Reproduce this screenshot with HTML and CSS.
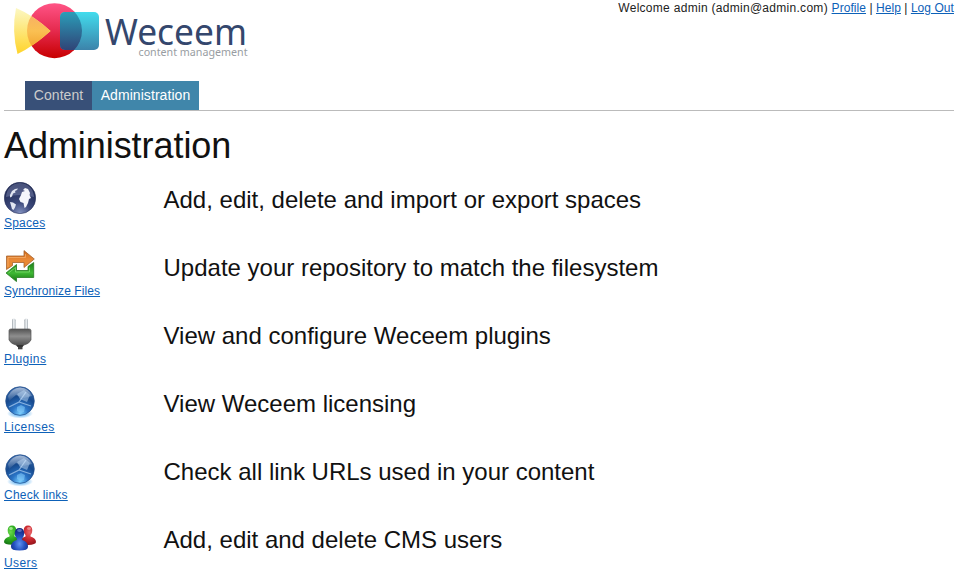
FILE: index.html
```
<!DOCTYPE html>
<html lang="en">
<head>
<meta charset="utf-8">
<title>Weceem - Administration</title>
<link rel="stylesheet" href="styles.css">
</head>
<body>
<svg class="defs" width="0" height="0" aria-hidden="true">
  <defs>
    <radialGradient id="orb" cx=".5" cy=".95" r=".95"><stop offset="0" stop-color="#7ad0ff"/><stop offset=".3" stop-color="#2a74c6"/><stop offset=".65" stop-color="#174a8e"/><stop offset="1" stop-color="#3a68a8"/></radialGradient>
    <linearGradient id="shine" x2="0" y2="1"><stop offset="0" stop-color="#fff" stop-opacity=".55"/><stop offset="1" stop-color="#fff" stop-opacity=".05"/></linearGradient>
    <radialGradient id="halo"><stop offset=".4" stop-color="#56aef0" stop-opacity=".8"/><stop offset="1" stop-color="#56aef0" stop-opacity="0"/></radialGradient>
    <symbol id="globe" viewBox="0 0 32 32">
      <ellipse cx="16" cy="27.500" rx="13" ry="5" fill="url(#halo)"/>
      <circle cx="16" cy="15" r="14.300" fill="url(#orb)" stroke="#234f8c" stroke-width=".7"/>
      <path d="M13 21l4-2 4 2-1 5-3 1-4-2z" fill="#8ed4ff" opacity=".5"/>
      <path d="M4 10Q8 2 16 1.500Q25 2 28 10L20 12 12 9 5 15z" fill="url(#shine)"/>
      <path d="M13 8l7-4 6 5-3 7-7-3z" fill="#bcd8f4" opacity=".5"/>
      <path d="M5 21L15 16 22 6M15 16L27 20" fill="none" stroke="#c9e5ff" stroke-width="1.300" opacity=".6"/>
    </symbol>
  </defs>
</svg>
<header class="header">
  <svg class="logo" width="256" height="66" viewBox="0 0 256 66" role="img" aria-label="Weceem content management">
    <defs>
      <linearGradient id="red" x2="0" y2="1"><stop offset="0" stop-color="#ff5486"/><stop offset=".5" stop-color="#e52a4e"/><stop offset="1" stop-color="#c80000"/></linearGradient>
      <linearGradient id="yellow" x2="0" y2="1"><stop offset="0" stop-color="#fcf8c4"/><stop offset="1" stop-color="#ffd42a"/></linearGradient>
      <linearGradient id="amber" x2="0" y2="1"><stop offset="0" stop-color="#f7aa6c"/><stop offset=".5" stop-color="#fac053"/><stop offset="1" stop-color="#f09a22"/></linearGradient>
      <linearGradient id="cyan" x2="0" y2="1"><stop offset="0" stop-color="#42dced"/><stop offset="1" stop-color="#3c83aa"/></linearGradient>
      <linearGradient id="navy" x2="0" y2="1"><stop offset="0" stop-color="#2b9db8"/><stop offset="1" stop-color="#304477"/></linearGradient>
      <clipPath id="disc"><circle cx="54.500" cy="30.700" r="27.500"/></clipPath>
    </defs>
    <circle cx="54.500" cy="30.700" r="27.500" fill="url(#red)"/>
    <path d="M16 8Q33 15 50.500 31Q34 46 17.500 54Q11.500 31 16 8Z" fill="url(#yellow)"/>
    <rect x="60" y="12" width="39" height="38" rx="5" fill="url(#cyan)"/>
    <g clip-path="url(#disc)">
      <path d="M16 8Q33 15 50.500 31Q34 46 17.500 54Q11.500 31 16 8Z" fill="url(#amber)"/>
      <rect x="60" y="12" width="39" height="38" rx="5" fill="url(#navy)"/>
    </g>
    <text class="brand" x="105" y="45" textLength="142" lengthAdjust="spacingAndGlyphs">Weceem</text>
    <text class="tagline" x="138.500" y="56" textLength="109" lengthAdjust="spacingAndGlyphs">content management</text>
  </svg>
  <div class="account">Welcome admin (admin@admin.com) <span class="links"><a href="#">Profile</a> | <a href="#">Help</a> | <a href="#">Log Out</a></span></div>
</header>
<nav class="tabs"><a class="tab" href="#">Content</a><a class="tab tab-active" href="#">Administration</a></nav>
<main>
  <h1>Administration</h1>
  <div class="row">
    <div class="tool">
      <svg class="icon" viewBox="0 0 32 32">
        <defs><radialGradient id="space" cx=".5" cy="1" r=".9"><stop offset="0" stop-color="#8796c4"/><stop offset=".4" stop-color="#3d4a7c"/><stop offset="1" stop-color="#1d2750"/></radialGradient></defs>
        <circle cx="16" cy="16" r="15.700" fill="url(#space)" stroke="#27305a" stroke-width=".6"/>
        <path d="M2 15Q3 2 16 1Q29 2 30 15Q16 11 2 15Z" fill="#aab5dc" opacity=".32"/>
        <path d="M6 13l2-4 3-2 3-.5-1 1.500-2 1 .5 1.500-2.500 1-1 3-2 1zM6 20l3 .5 3 2-1 3-1.500 2.500-1.500-1z" fill="#e2e6f2"/>
        <path d="M17 13l1-3 3-1-2-1 2-2 3 1 2 4-.5 2 1.500 3-2 1-1 4-2 4-1.500 1-1-5-3-1-1.500-3z" fill="#f4f6fb"/>
      </svg>
      <a href="#">Spaces</a>
    </div>
    <div class="desc">Add, edit, delete and import or export spaces</div>
  </div>
  <div class="row">
    <div class="tool">
      <svg class="icon" viewBox="0 0 32 32">
        <defs>
          <linearGradient id="orange" x2="0" y2="1"><stop offset="0" stop-color="#d06a18"/><stop offset=".5" stop-color="#e98a38"/><stop offset="1" stop-color="#e8862a"/></linearGradient>
          <linearGradient id="green" x2="0" y2="1"><stop offset="0" stop-color="#1d7d18"/><stop offset=".55" stop-color="#3fb834"/><stop offset="1" stop-color="#15740f"/></linearGradient>
        </defs>
        <path d="M2.500 19.500V6H20V.6L30.300 9 20 17.500V12.500H8.500V15.500Z" fill="url(#orange)" stroke="#a4622f" stroke-width=".8"/>
        <path d="M4 17V7.500H21.500V4" fill="none" stroke="#ffc58a" stroke-width=".7" opacity=".7"/>
        <path d="M29.700 12.500V27.500H12.500V31.600L2 23 12.500 14.500V20.500H24V16.500Z" fill="url(#green)" stroke="#267b22" stroke-width=".8"/>
        <path d="M4.500 23L11.500 17.500V22H25.500V17.500" fill="none" stroke="#8ee680" stroke-width=".8" opacity=".8"/>
      </svg>
      <a class="snug" href="#">Synchronize Files</a>
    </div>
    <div class="desc">Update your repository to match the filesystem</div>
  </div>
  <div class="row">
    <div class="tool">
      <svg class="icon" viewBox="0 0 32 32">
        <defs>
          <linearGradient id="plug" x2="0" y2="1"><stop offset="0" stop-color="#535353"/><stop offset=".45" stop-color="#8e8e8e"/><stop offset="1" stop-color="#505050"/></linearGradient>
          <linearGradient id="pin"><stop offset="0" stop-color="#9da4aa"/><stop offset=".5" stop-color="#f5f8fa"/><stop offset="1" stop-color="#a5adb4"/></linearGradient>
        </defs>
        <rect x="8" y=".5" width="3.600" height="12" rx="1.700" fill="url(#pin)"/><rect x="20.400" y=".5" width="3.600" height="12" rx="1.700" fill="url(#pin)"/>
        <path d="M14 25h4.500v6.300H14z" fill="#424242"/>
        <path d="M5 12.500Q5 11 7 11H25Q27 11 27 12.500V22Q25 26 20 27H12Q7 26 5 22Z" fill="url(#plug)" stroke="#555" stroke-width=".7"/>
        <path d="M12 27h8l-1.500 2h-5z" fill="#343434"/>
      </svg>
      <a class="wide" href="#">Plugins</a>
    </div>
    <div class="desc">View and configure Weceem plugins</div>
  </div>
  <div class="row">
    <div class="tool"><svg class="icon"><use href="#globe"/></svg><a class="wide" href="#">Licenses</a></div>
    <div class="desc">View Weceem licensing</div>
  </div>
  <div class="row">
    <div class="tool"><svg class="icon"><use href="#globe"/></svg><a href="#">Check links</a></div>
    <div class="desc">Check all link URLs used in your content</div>
  </div>
  <div class="row">
    <div class="tool">
      <svg class="icon" viewBox="0 0 32 32">
        <defs>
          <radialGradient id="ug" cx=".4" cy=".35" r=".7"><stop offset="0" stop-color="#6ad84a"/><stop offset=".5" stop-color="#2fad22"/><stop offset="1" stop-color="#136d12"/></radialGradient>
          <radialGradient id="ur" cx=".6" cy=".35" r=".7"><stop offset="0" stop-color="#e86468"/><stop offset=".5" stop-color="#cc2a30"/><stop offset="1" stop-color="#8d1118"/></radialGradient>
          <radialGradient id="ub" cx=".5" cy=".7" r=".65"><stop offset="0" stop-color="#5f91f2"/><stop offset=".5" stop-color="#2450bf"/><stop offset="1" stop-color="#13257c"/></radialGradient>
        </defs>
        <path d="M8 3.500C2.500 3.500 3 11 5.500 13V14.500Q0 16 0 20Q0 22.500 8 22.800Q16 22 16 20Q16 16 10.500 14.500V13C13 11 13.500 3.500 8 3.500Z" fill="url(#ug)"/>
        <path d="M24 3.500C18.500 3.500 19 11 21.500 13V14.500Q16 16 16 20Q16 22.500 24 23Q32 22.500 32 20Q32 16 26.500 14.500V13C29 11 29.500 3.500 24 3.500Z" fill="url(#ur)"/>
        <path d="M15.500 6C9.500 6 10 14 12.800 16.500V18Q7 19.500 7 25Q7 28.500 15.500 28.500Q24 28.500 24 25Q24 19.500 18.200 18V16.500C21 14 21.500 6 15.500 6Z" fill="url(#ub)"/>
        <ellipse cx="7" cy="6.500" rx="1.800" ry="1.400" fill="#d4ffc4" opacity=".6"/><ellipse cx="25" cy="6.500" rx="2" ry="1.400" fill="#ffc9c9" opacity=".5"/><ellipse cx="15.500" cy="8.500" rx="2.400" ry="1.400" fill="#a9c2ff" opacity=".45"/>
      </svg>
      <a class="wide" href="#">Users</a>
    </div>
    <div class="desc">Add, edit and delete CMS users</div>
  </div>
</main>
</body>
</html>
```
FILE: styles.css
```
* { box-sizing: border-box; }
html { overflow: hidden; }
body { margin: 0; padding: 0 11px 0 4px; background: #fff; color: #111; font: 12px/16px "Liberation Sans", Arial, sans-serif; }
a { color: #0d61b8; }
.defs { display: block; }
.header { display: flex; justify-content: space-between; height: 81px; }
.logo { margin-left: -4px; flex: none; overflow: visible; }
.brand { font: 37px "Noto Sans", sans-serif; fill: #34476d; }
.tagline { font: 11.500px "Noto Sans", sans-serif; fill: #989da2; }
.account { white-space: nowrap; color: #222; letter-spacing: .29px; }
.links { letter-spacing: .06px; }
.tabs { display: flex; height: 30px; padding-left: 21px; border-bottom: 1px solid #bbb; }
.tab { height: 29px; width: 67px; text-align: center; background: #385078; color: #ccc; font-size: 14px; line-height: 29px; text-decoration: none; letter-spacing: .06px; }
.tab-active { width: 107px; background: #4086aa; color: #fff; }
h1 { margin: 14px 0 15px; font-size: 36px; line-height: 42px; font-weight: 400; letter-spacing: -.06px; }
.row { display: grid; grid-template-columns: 159.500px 1fr; height: 68px; }
.tool { display: flex; flex-direction: column; align-items: flex-start; }
.icon { display: block; width: 32px; height: 32px; margin-bottom: 1px; }
.tool a { letter-spacing: .22px; }
.tool .snug { letter-spacing: .08px; }
.tool .wide { letter-spacing: .42px; }
.desc { padding-top: 4px; font-size: 24px; line-height: 28px; white-space: nowrap; }
```
